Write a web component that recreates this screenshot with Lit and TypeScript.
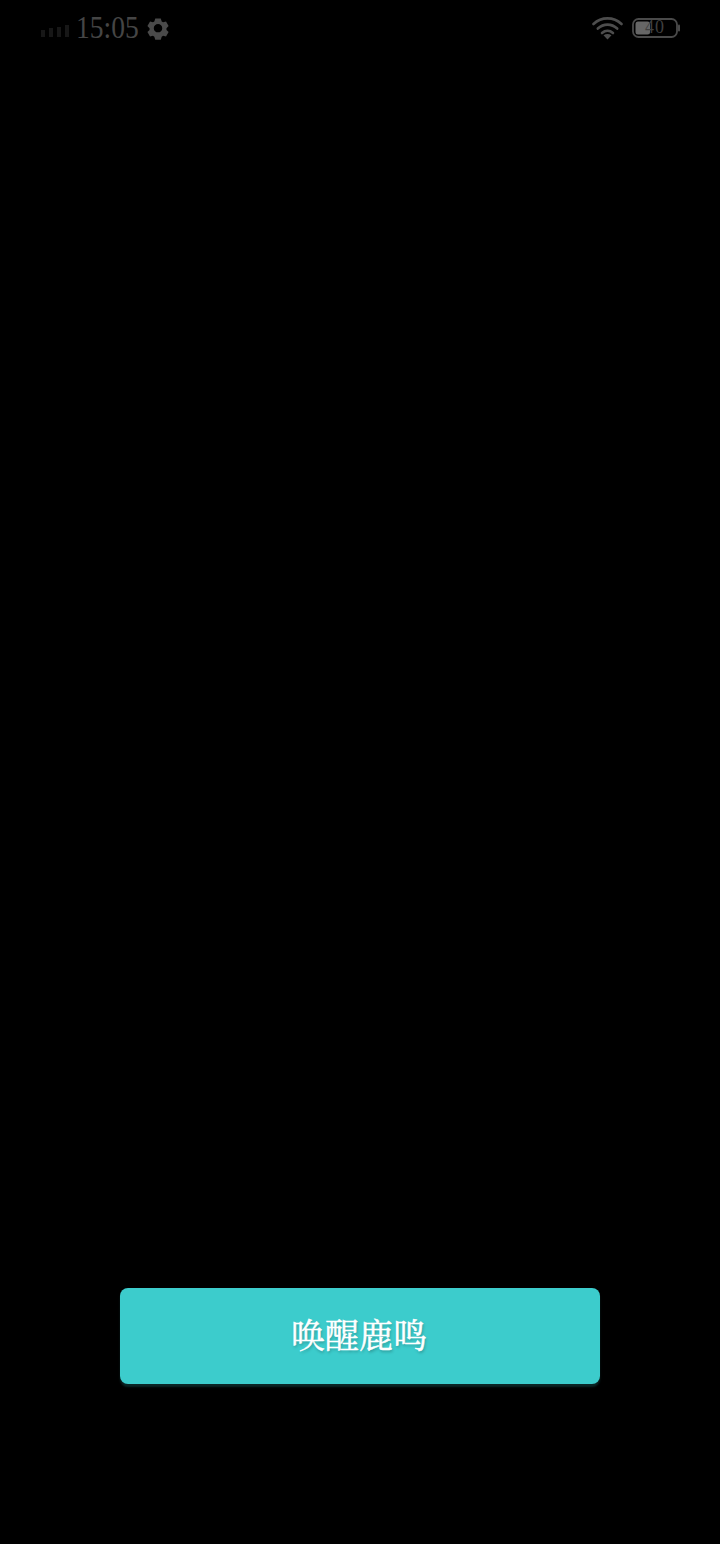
import { LitElement, html, css } from "lit";
import { customElement } from "lit/decorators.js";

@customElement("app-root")
export class AppRoot extends LitElement {
  static styles = css`
    :host { display: flex; flex-direction: column; width: 720px; height: 1544px; background: #000; font-family: "Liberation Serif", "Noto Serif CJK SC", "Noto Sans CJK SC", serif; overflow: hidden; }
    .status { display: flex; align-items: center; justify-content: space-between; height: 56px; padding: 0 41px; color: #4a4a4a; box-sizing: border-box; }
    .left, .right { display: flex; align-items: center; }
    .signal { display: flex; align-items: flex-end; gap: 4px; height: 13px; margin-top: 5px; }
    .signal i { display: block; width: 4px; background: #171717; }
    .b1 { height: 7px; } .b2 { height: 9px; } .b3 { height: 10px; } .b4 { height: 12px; }
    .time { font-size: 32px; line-height: 32px; margin-left: 7px; margin-top: -2px; color: #454545; transform: scaleX(0.86); transform-origin: left center; width: 64px; }
    .gear { margin-left: 7px; display: block; }
    .wifi { display: block; margin-right: 9px; }
    .battery { position: relative; width: 48px; height: 20px; margin-right: -1px; }
    .battery svg { display: block; }
    .level { position: absolute; left: 8px; top: -1px; width: 30px; text-align: center; font-size: 18px; line-height: 20px; letter-spacing: 1px; color: #3f3f3f; }
    .spacer { flex: 1; }
    .action { display: flex; justify-content: center; padding-bottom: 160px; }
    button { width: 480px; height: 96px; border: 0; border-radius: 8px; background: #3ccccc; color: #fff; font: inherit; font-size: 34px; -webkit-text-stroke: 0.5px #fff; box-shadow: 0 3px 2px rgba(60, 204, 204, 0.18); text-shadow: 1px 2px 3px rgba(0, 0, 0, 0.25); padding: 0 2px 5px 0; }
  `;
  render() {
    return html`
      <div class="status">
        <div class="left">
          <div class="signal"><i class="b1"></i><i class="b2"></i><i class="b3"></i><i class="b4"></i></div>
          <div class="time">15:05</div>
          <svg class="gear" width="22" height="24" viewBox="0 0 22 24"><path fill="#4a4a4a" fill-rule="evenodd" d="M8 1.500h6l1 3.200 1.500.9 3.200-.8 2.800 5-2.300 2.300v1.800l2.300 2.300-2.800 5-3.200-.8-1.500.9-1 3.200H8l-1-3.200-1.500-.9-3.200.8-2.800-5 2.300-2.300v-1.800L-.5 9.800l2.800-5 3.200.8 1.500-.9ZM11 7.400a4.600 4.600 0 1 0 0 9.200 4.600 4.600 0 0 0 0-9.200Z" transform="translate(.9 1.100) scale(.92)"/></svg>
        </div>
        <div class="right">
          <svg class="wifi" width="31" height="23" viewBox="0 0 31 23" fill="none" stroke="#4d4d4d" stroke-width="2.600" stroke-linecap="round"><path d="M1.500 7C9.500-.5 21.500-.5 29.500 7"/><path d="M5.800 11.500C11.500 6.300 19.500 6.300 25.200 11.500"/><path d="M10 16c3.300-2.800 7.700-2.800 11 0"/><path d="M11.500 18.300 15.500 22.500 19.500 18.300C17 16.700 14 16.700 11.500 18.300Z" fill="#4d4d4d" stroke="none"/></svg>
          <div class="battery">
            <svg width="48" height="20" viewBox="0 0 48 20"><rect x="1" y="1" width="44" height="18" rx="5.500" fill="none" stroke="#4a4a4a" stroke-width="1.800"/><rect x="3.500" y="3.500" width="14.500" height="13" rx="2.500" fill="#666"/><rect x="46" y="6.500" width="2" height="7" rx="1" fill="#4a4a4a"/></svg>
            <div class="level">40</div>
          </div>
        </div>
      </div>
      <div class="spacer"></div>
      <div class="action"><button>唤醒鹿鸣</button></div>
    `;
  }
}
